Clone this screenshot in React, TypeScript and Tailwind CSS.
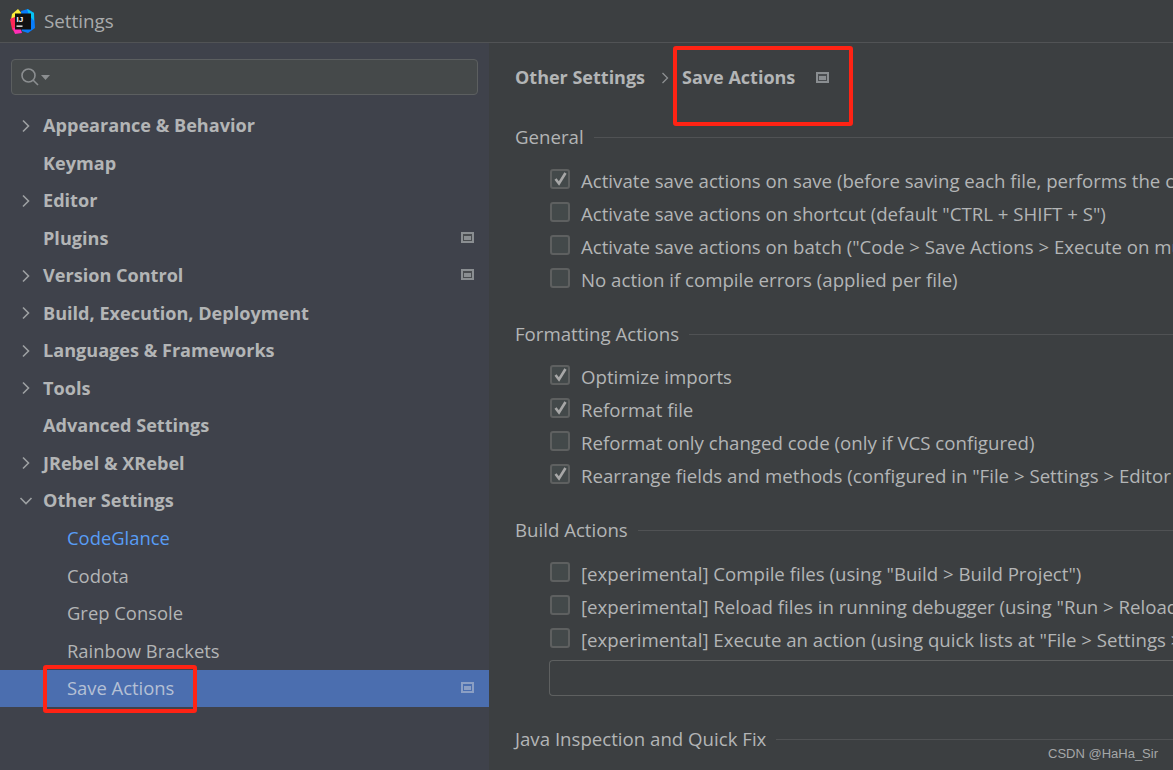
const treeItems = [
  { label: "Appearance & Behavior", bold: true, arrow: "right" },
  { label: "Keymap", bold: true },
  { label: "Editor", bold: true, arrow: "right" },
  { label: "Plugins", bold: true, badge: true },
  { label: "Version Control", bold: true, arrow: "right", badge: true },
  { label: "Build, Execution, Deployment", bold: true, arrow: "right" },
  { label: "Languages & Frameworks", bold: true, arrow: "right" },
  { label: "Tools", bold: true, arrow: "right" },
  { label: "Advanced Settings", bold: true },
  { label: "JRebel & XRebel", bold: true, arrow: "right" },
  { label: "Other Settings", bold: true, arrow: "down" },
  { label: "CodeGlance", child: true, link: true },
  { label: "Codota", child: true },
  { label: "Grep Console", child: true },
  { label: "Rainbow Brackets", child: true },
  { label: "Save Actions", child: true, badge: true, selected: true },
];

const sections = [
  {
    title: "General",
    className: "mt-[35px]",
    listClass: "mt-[15px]",
    options: [
      { label: "Activate save actions on save (before saving each file, performs the configured actions below)", checked: true },
      { label: 'Activate save actions on shortcut (default "CTRL + SHIFT + S")' },
      { label: 'Activate save actions on batch ("Code > Save Actions > Execute on multiple files")' },
      { label: "No action if compile errors (applied per file)" },
    ],
  },
  {
    title: "Formatting Actions",
    className: "mt-[26px]",
    listClass: "mt-[14px]",
    options: [
      { label: "Optimize imports", checked: true },
      { label: "Reformat file", checked: true },
      { label: "Reformat only changed code (only if VCS configured)" },
      { label: 'Rearrange fields and methods (configured in "File > Settings > Editor > Code Style > Java")', checked: true },
    ],
  },
  {
    title: "Build Actions",
    className: "mt-[26px]",
    listClass: "mt-[15px]",
    options: [
      { label: '[experimental] Compile files (using "Build > Build Project")' },
      { label: '[experimental] Reload files in running debugger (using "Run > Reload Changed Classes")' },
      { label: '[experimental] Execute an action (using quick lists at "File > Settings > Appearance & Behavior > Quick Lists")' },
    ],
  },
];

function Chevron({ dir }: { dir: string }) {
  return (
    <svg width="14" height="14" viewBox="0 0 14 14" fill="none" stroke="#9da0a2" strokeWidth="1.6">
      {dir === "right" ? <path d="M4 1.5 9.5 7 4 12.5" /> : <path d="M1.5 4 7 9.5 12.5 4" />}
    </svg>
  );
}

function ProjectBadge({ selected }: { selected?: boolean }) {
  const light = selected ? "#8b9fc4" : "#8a8e91";
  const dark = selected ? "#4b6eaf" : "#4a4d50";
  return (
    <svg width="13" height="11" viewBox="0 0 13 11">
      <rect x="0" y="0" width="13" height="11" fill={light} />
      <rect x="2" y="2" width="9" height="7" fill={dark} />
      <rect x="3" y="4" width="7" height="4" fill={light} />
    </svg>
  );
}

function Logo() {
  return (
    <svg width="25" height="25" viewBox="0 0 25 25">
      <path d="M2 5 8 0 13 6 6 12 1 11Z" fill="#fcee39" />
      <path d="M0 10 7 7 9 20 5 24 2 20Z" fill="#fe2857" />
      <path d="M3 19 10 18 12 24 5 25Z" fill="#fe2eb6" />
      <path d="M11 2 18 0 24 4 25 19 18 24 12 22Z" fill="#087cfa" />
      <path d="M17 0 24 4 24 12 19 6Z" fill="#07c3f2" />
      <rect x="5" y="4.5" width="16" height="16" fill="#111" />
      <text x="6.5" y="12.5" fontSize="8" fontWeight="700" fill="#fff" fontFamily="Liberation Sans, sans-serif">IJ</text>
      <rect x="6.5" y="16.5" width="6" height="1.3" fill="#fff" />
    </svg>
  );
}

function Checkbox({ checked }: { checked?: boolean }) {
  return (
    <span className="mb-[4px] ml-[1px] flex h-[20px] w-[20px] shrink-0 items-center justify-center rounded-[3px] border-2 border-[#5e6060] bg-[#43494a]">
      {checked && (
        <svg width="15" height="15" viewBox="0 0 15 15" fill="none" stroke="#a7a7a7" strokeWidth="2.6">
          <path d="M2.5 8 6 12.5 12.5 2" />
        </svg>
      )}
    </span>
  );
}

function Heading({ title }: { title: string }) {
  return (
    <div className="flex h-[24px] items-center gap-[10px]">
      <span className="whitespace-nowrap">{title}</span>
      <div className="h-px flex-1 bg-[#505254]" />
    </div>
  );
}

function Option({ label, checked }: { label: string; checked?: boolean }) {
  return (
    <div className="flex h-[33px] items-center gap-[11px] whitespace-nowrap">
      <Checkbox checked={checked} />
      <span>{label}</span>
    </div>
  );
}

function Box({ className }: { className: string }) {
  return <div className={`pointer-events-none absolute rounded-[3px] border-[4px] border-[#ff2314] ${className}`} />;
}

export default function App() {
  return (
    <div className="relative flex h-[770px] w-[1173px] flex-col overflow-hidden bg-[#3c3f41] font-['Open_Sans',sans-serif] text-[18.4px] text-[#b3b5b6]">
      <div className="flex h-[43px] shrink-0 items-center gap-[9px] border-b border-[#515355] pl-[10px]">
        <Logo />
        <span className="mt-[1px] text-[18.8px] text-[#a9abac]">Settings</span>
      </div>
      <div className="flex min-h-0 flex-1">
        <aside className="w-[489px] shrink-0 bg-[#3f424b] pt-[16px]">
          <div className="mx-[11px] flex h-[36px] w-[467px] items-center gap-[1px] rounded-[4px] border-[1.5px] border-[#5c5f60] bg-[#45494a] pl-[8px]">
            <svg width="20" height="20" viewBox="0 0 20 20" fill="none" stroke="#8b8e90" strokeWidth="1.6">
              <circle cx="8.5" cy="8.5" r="6.5" />
              <path d="M13 13l5 5" />
            </svg>
            <svg width="9" height="5" viewBox="0 0 9 5"><path d="M0 0h9L4.5 5z" fill="#8b8e90" /></svg>
          </div>
          <div className="mt-[12px]">
            {treeItems.map((item) => (
              <div
                key={item.label}
                className={`flex h-[37.5px] items-center whitespace-nowrap ${item.selected ? "bg-[#4b6eaf]" : ""}`}
              >
                <span className="flex w-[43px] shrink-0 justify-end pr-[10px]">
                  {item.arrow && <Chevron dir={item.arrow} />}
                </span>
                <span
                  className={`${item.bold ? "text-[18.1px] font-bold" : ""} ${item.child ? "pl-[24px]" : ""} ${item.link ? "text-[#589df6]" : ""} ${item.selected ? "text-[#b5c0d5]" : ""}`}
                >
                  {item.label}
                </span>
                {item.badge && (
                  <span className="mb-[2px] ml-auto flex pr-[15px]">
                    <ProjectBadge selected={item.selected} />
                  </span>
                )}
              </div>
            ))}
          </div>
        </aside>
        <main className="min-w-0 flex-1 pl-[26px] pt-[22px] text-[18.65px]">
          <div className="flex h-[25px] items-center whitespace-nowrap text-[18px] font-bold">
            <span>Other Settings</span>
            <svg className="ml-[16px]" width="8" height="12" viewBox="0 0 8 12" fill="none" stroke="#8d9092" strokeWidth="1.3">
              <path d="M1.5 1 6.5 6 1.5 11" />
            </svg>
            <span className="ml-[13px]">Save Actions</span>
            <span className="ml-[21px] flex"><ProjectBadge /></span>
          </div>
          {sections.map((section) => (
            <section key={section.title} className={section.className}>
              <Heading title={section.title} />
              <div className={`${section.listClass} pl-[34px]`}>
                {section.options.map((option) => (
                  <Option key={option.label} label={option.label} checked={option.checked} />
                ))}
              </div>
            </section>
          ))}
          <div className="ml-[34px] mt-[4px] h-[36px] rounded-l-[4px] border-[1.5px] border-r-0 border-[#5e6060] bg-[#3c3f41]" />
          <div className="mt-[31px]">
            <Heading title="Java Inspection and Quick Fix" />
          </div>
        </main>
      </div>
      <Box className="left-[673px] top-[46px] h-[80px] w-[180px]" />
      <Box className="left-[43px] top-[665px] h-[48px] w-[154px]" />
      <span className="absolute left-[1048px] top-[744px] font-['Liberation_Sans',sans-serif] text-[13px] text-[#a5a7a8]">CSDN @HaHa_Sir</span>
    </div>
  );
}
